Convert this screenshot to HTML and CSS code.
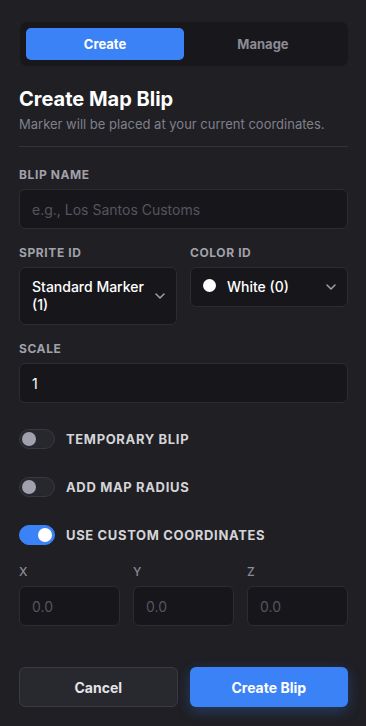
FILE: index.html
```html
<!DOCTYPE html>
<html lang="en">
<head>
  <meta charset="UTF-8">
  <title>Map Blips</title>
  <link rel="stylesheet" href="styles.css">
</head>
<body>

<div class="panel">
  <div class="tabs">
    <button class="tab active">Create</button>
    <button class="tab">Manage</button>
  </div>

  <div class="header">
    <h2>Create Map Blip</h2>
    <p>Marker will be placed at your current coordinates.</p>
  </div>

  <div class="field">
    <label>Blip Name</label>
    <input type="text" placeholder="e.g., Los Santos Customs">
  </div>

  <div class="row-2">
    <div class="field">
      <label>Sprite ID</label>
      <div class="select">
        <span class="select-text">Standard Marker (1)</span>
        <svg class="chevron" width="10" height="6" viewBox="0 0 10 6"><path d="M1 1l4 4 4-4" fill="none" stroke="#a1a1aa" stroke-width="1.5" stroke-linecap="round" stroke-linejoin="round"/></svg>
      </div>
    </div>
    <div class="field">
      <label>Color ID</label>
      <div class="select">
        <span class="dot"></span>
        <span class="select-text">White (0)</span>
        <svg class="chevron" width="10" height="6" viewBox="0 0 10 6"><path d="M1 1l4 4 4-4" fill="none" stroke="#a1a1aa" stroke-width="1.5" stroke-linecap="round" stroke-linejoin="round"/></svg>
      </div>
    </div>
  </div>

  <div class="field">
    <label>Scale</label>
    <input type="text" value="1">
  </div>

  <div class="toggles">
    <div class="toggle-row">
      <span class="toggle"></span>
      <span class="toggle-label">Temporary Blip</span>
    </div>
    <div class="toggle-row">
      <span class="toggle"></span>
      <span class="toggle-label">Add Map Radius</span>
    </div>
    <div class="toggle-row">
      <span class="toggle on"></span>
      <span class="toggle-label">Use Custom Coordinates</span>
    </div>
  </div>

  <div class="row-3">
    <div class="field">
      <label class="axis">X</label>
      <input type="text" placeholder="0.0">
    </div>
    <div class="field">
      <label class="axis">Y</label>
      <input type="text" placeholder="0.0">
    </div>
    <div class="field">
      <label class="axis">Z</label>
      <input type="text" placeholder="0.0">
    </div>
  </div>

  <div class="actions">
    <button class="btn cancel">Cancel</button>
    <button class="btn primary">Create Blip</button>
  </div>
</div>

</body>
</html>
```

FILE: styles.css
```css
* {
  box-sizing: border-box;
}

body {
  margin: 0;
  background: #1f1f24;
  font-family: Inter, "Noto Sans", sans-serif;
  color: #fafafa;
}

.panel {
  padding: 22px 18px 20px 19px;
}

.tabs {
  display: grid;
  grid-template-columns: 1fr 1fr;
  gap: 0;
  padding: 6px;
  margin-left: 1px;
  background: #18181c;
  border-radius: 7px;
}

.tab {
  height: 32px;
  border: none;
  border-radius: 5px;
  background: transparent;
  color: #8b8b95;
  font-family: inherit;
  font-size: 13px;
  font-weight: 700;
  cursor: pointer;
}

.tab.active {
  background: #3b82f6;
  color: #fff;
}

.header {
  margin-top: 19px;
  padding-bottom: 13px;
  border-bottom: 1px solid #33333a;
  margin-bottom: 20px;
}

.header h2 {
  margin: 0;
  font-size: 20px;
  line-height: 28px;
  font-weight: 700;
  color: #fff;
}

.header p {
  margin: 2px 0 0;
  font-size: 13px;
  line-height: 18px;
  color: #80808b;
}

.field {
  display: flex;
  flex-direction: column;
  margin-bottom: 16px;
}

.field label {
  font-size: 12px;
  line-height: 16px;
  font-weight: 700;
  text-transform: uppercase;
  letter-spacing: 0.05em;
  color: #a1a1aa;
  margin-bottom: 6px;
}

.field label.axis {
  font-weight: 500;
  color: #8b8b95;
}

input[type="text"] {
  height: 40px;
  width: 100%;
  padding: 0 12px;
  background: #17171b;
  border: 1px solid #2c2c32;
  border-radius: 6px;
  color: #fff;
  font-family: inherit;
  font-size: 14px;
  outline: none;
}

input::placeholder {
  color: #55555e;
}

.row-2 {
  display: grid;
  grid-template-columns: 1fr 1fr;
  gap: 13px;
  align-items: start;
}

.select {
  display: flex;
  align-items: center;
  padding: 10px 11px 10px 12px;
  background: #17171b;
  border: 1px solid #2c2c32;
  border-radius: 6px;
  font-size: 14px;
  line-height: 18px;
  font-weight: 500;
  color: #fff;
}

.select-text {
  flex: 1;
}

.chevron {
  flex-shrink: 0;
  margin-left: 4px;
}

.dot {
  width: 13px;
  height: 13px;
  border-radius: 50%;
  background: #fff;
  margin-right: 11px;
  margin-top: -3px;
}

.toggles {
  display: flex;
  flex-direction: column;
  gap: 28px;
  margin-top: 26px;
  margin-bottom: 19px;
}

.toggle-row {
  display: flex;
  align-items: center;
  gap: 11px;
}

.toggle {
  position: relative;
  width: 36px;
  height: 20px;
  border-radius: 10px;
  background: #27272e;
  border: 1px solid #38383f;
}

.toggle::after {
  content: "";
  position: absolute;
  top: 2px;
  left: 2px;
  width: 14px;
  height: 14px;
  border-radius: 50%;
  background: #a1a1ae;
}

.toggle.on {
  background: #3b82f6;
  border-color: #3b82f6;
}

.toggle.on::after {
  left: 18px;
  background: #fff;
}

.toggle-label {
  font-size: 13px;
  font-weight: 700;
  text-transform: uppercase;
  letter-spacing: 0.05em;
  color: #d4d4d8;
}

.row-3 {
  display: grid;
  grid-template-columns: 1fr 1fr 1fr;
  gap: 13px;
}

.actions {
  display: grid;
  grid-template-columns: 1fr 1fr;
  gap: 12px;
  margin-top: 25px;
}

.btn {
  height: 40px;
  border-radius: 6px;
  font-family: inherit;
  font-size: 14px;
  font-weight: 700;
  cursor: pointer;
}

.btn.cancel {
  background: #28282f;
  border: 1px solid #3a3a42;
  color: #e4e4e7;
}

.btn.primary {
  background: #3b82f6;
  border: none;
  color: #fff;
  box-shadow: 0 4px 14px rgba(59, 130, 246, 0.3);
}
```
